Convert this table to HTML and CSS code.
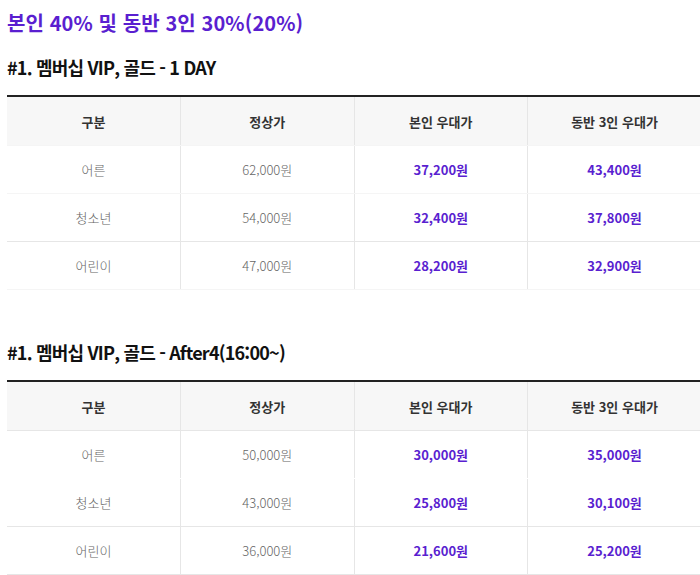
FILE: index.html
```html
<!DOCTYPE html>
<html lang="ko">
<head>
<meta charset="utf-8">
<link rel="stylesheet" href="styles.css">
</head>
<body>
<div class="page">
  <h2 class="title">본인 40% 및 동반 3인 30%(20%)</h2>

  <section class="block">
    <h3 class="heading">#1. 멤버십 VIP, 골드 - 1 DAY</h3>
    <table class="price">
      <thead>
        <tr class="faint"><th>구분</th><th>정상가</th><th>본인 우대가</th><th>동반 3인 우대가</th></tr>
      </thead>
      <tbody>
        <tr class="faint"><td>어른</td><td>62,000원</td><td class="hi">37,200원</td><td class="hi">43,400원</td></tr>
        <tr><td>청소년</td><td>54,000원</td><td class="hi">32,400원</td><td class="hi">37,800원</td></tr>
        <tr class="faint"><td>어린이</td><td>47,000원</td><td class="hi">28,200원</td><td class="hi">32,900원</td></tr>
      </tbody>
    </table>
  </section>

  <section class="block second">
    <h3 class="heading">#1. 멤버십 VIP, 골드 - After4(16:00~)</h3>
    <table class="price">
      <thead>
        <tr><th>구분</th><th>정상가</th><th>본인 우대가</th><th>동반 3인 우대가</th></tr>
      </thead>
      <tbody>
        <tr class="none"><td>어른</td><td>50,000원</td><td class="hi">30,000원</td><td class="hi">35,000원</td></tr>
        <tr><td>청소년</td><td>43,000원</td><td class="hi">25,800원</td><td class="hi">30,100원</td></tr>
        <tr><td>어린이</td><td>36,000원</td><td class="hi">21,600원</td><td class="hi">25,200원</td></tr>
      </tbody>
    </table>
  </section>
</div>
</body>
</html>
```

FILE: styles.css
```css
html, body {
  margin: 0;
  padding: 0;
  background: #fff;
  overflow: hidden;
}
body {
  font-family: "Noto Sans CJK KR", "Noto Sans", sans-serif;
  color: #333;
}
.page {
  padding: 0 0 0 7px;
}
.title {
  margin: 0;
  padding-top: 9px;
  height: 28px;
  font-size: 20px;
  line-height: 28px;
  font-weight: 700;
  color: #5a1fd0;
  letter-spacing: 0.1px;
}
.heading {
  margin: 0;
  height: 26px;
  font-size: 18px;
  line-height: 26px;
  font-weight: 700;
  color: #111;
  letter-spacing: -0.8px;
}
.block {
  padding-top: 17px;
}
.block .heading {
  margin-bottom: 15px;
}
.second {
  padding-top: 49px;
}
.price {
  width: 694px;
  border-collapse: collapse;
  table-layout: fixed;
  border-top: 2px solid #222;
  font-size: 13px;
}
.price th {
  background: #f7f7f7;
  height: 48px;
  padding: 0;
  font-weight: 700;
  color: #333;
  border-left: 1px solid #e6e6e6;
  border-bottom: 1px solid #e6e6e6;
}
.price td {
  height: 47px;
  padding: 0;
  text-align: center;
  font-weight: 300;
  color: #666;
  border-left: 1px solid #e6e6e6;
  border-bottom: 1px solid #e6e6e6;
}
.price th:first-child,
.price td:first-child {
  border-left: none;
}
.price tr.faint th,
.price tr.faint td {
  border-bottom-color: #f5f5f5;
}
.price tr.none td {
  border-bottom-color: #fff;
}
.price td.hi {
  color: #5a1fd0;
  font-weight: 700;
}
```
